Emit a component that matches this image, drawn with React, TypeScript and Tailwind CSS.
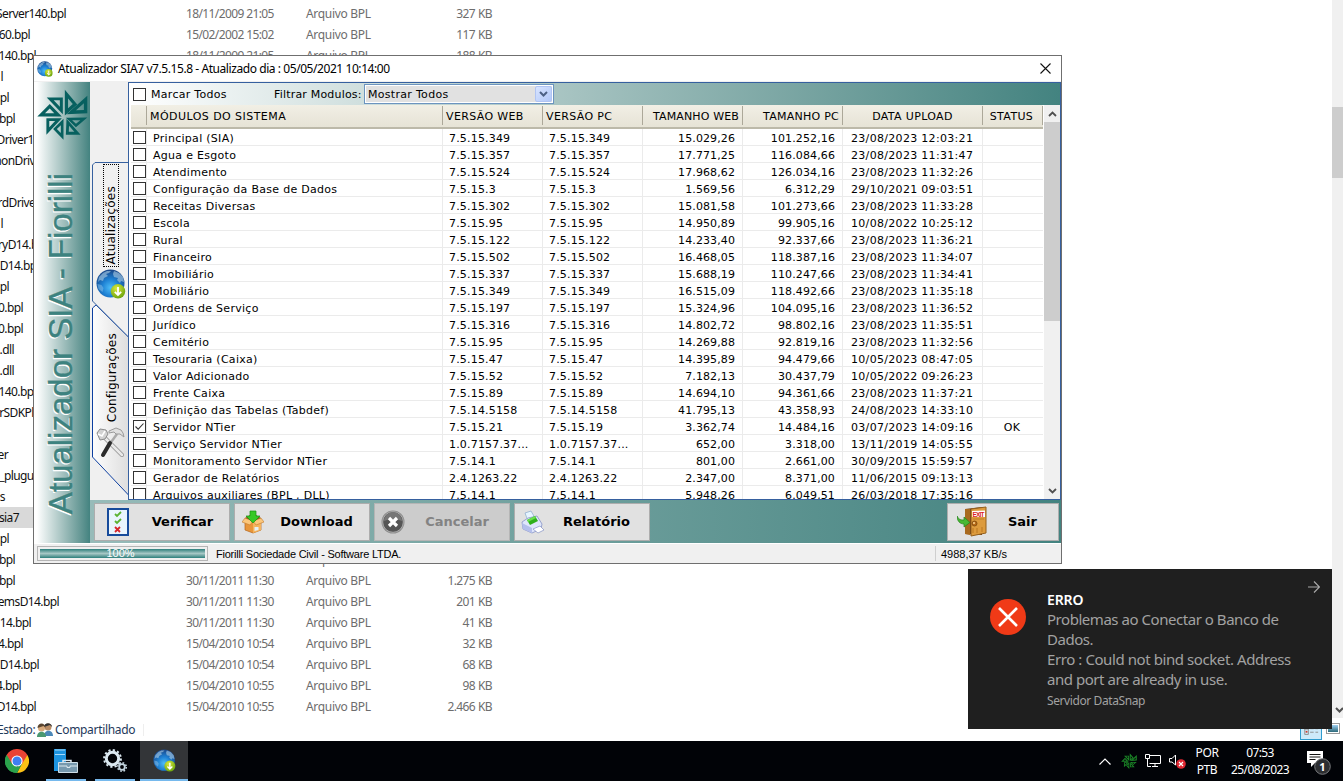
import type { ReactNode } from "react";

type FileRow = { name: string; end: number; date?: string; kind?: string; size?: string; selected?: boolean };

const files: FileRow[] = [
  { name: "Server140.bpl", end: 66, date: "18/11/2009 21:05", kind: "Arquivo BPL", size: "327 KB" },
  { name: "60.bpl", end: 30, date: "15/02/2002 15:02", kind: "Arquivo BPL", size: "117 KB" },
  { name: "140.bpl", end: 36, date: "18/11/2009 21:05", kind: "Arquivo BPL", size: "188 KB" },
  { name: "l", end: 3 },
  { name: "pl", end: 9 },
  { name: "bpl", end: 15 },
  { name: "Driver140.bpl", end: 65 },
  { name: "monDriver140.bpl", end: 83 },
  { name: "", end: 0 },
  { name: "rdDriver140.bpl", end: 77 },
  { name: "l", end: 3 },
  { name: "ryD14.bpl", end: 47 },
  { name: "D14.bpl", end: 39 },
  { name: "pl", end: 9 },
  { name: "0.bpl", end: 23 },
  { name: "0.bpl", end: 23 },
  { name: ".dll", end: 14 },
  { name: ".dll", end: 14 },
  { name: "140.bpl", end: 36 },
  { name: "rSDKPlugin.dll", end: 71 },
  { name: "", end: 0 },
  { name: "er", end: 8 },
  { name: "_pluguin", end: 43 },
  { name: "s", end: 5 },
  { name: "sia7", end: 19, selected: true },
  { name: "pl", end: 9 },
  { name: "bpl", end: 15, date: "02/11/2009 21:02", kind: "Arquivo BPL", size: "257 KB" },
  { name: "bpl", end: 15, date: "30/11/2011 11:30", kind: "Arquivo BPL", size: "1.275 KB" },
  { name: "emsD14.bpl", end: 59, date: "30/11/2011 11:30", kind: "Arquivo BPL", size: "201 KB" },
  { name: "14.bpl", end: 31, date: "30/11/2011 11:30", kind: "Arquivo BPL", size: "41 KB" },
  { name: "4.bpl", end: 23, date: "15/04/2010 10:54", kind: "Arquivo BPL", size: "32 KB" },
  { name: "D14.bpl", end: 39, date: "15/04/2010 10:54", kind: "Arquivo BPL", size: "68 KB" },
  { name: "4.bpl", end: 21, date: "15/04/2010 10:55", kind: "Arquivo BPL", size: "98 KB" },
  { name: "D14.bpl", end: 36, date: "15/04/2010 10:55", kind: "Arquivo BPL", size: "2.466 KB" },
];

const modules: string[][] = [
  ["Principal (SIA)", "7.5.15.349", "7.5.15.349", "15.029,26", "101.252,16", "23/08/2023 12:03:21"],
  ["Agua e Esgoto", "7.5.15.357", "7.5.15.357", "17.771,25", "116.084,66", "23/08/2023 11:31:47"],
  ["Atendimento", "7.5.15.524", "7.5.15.524", "17.968,62", "126.034,16", "23/08/2023 11:32:26"],
  ["Configuração da Base de Dados", "7.5.15.3", "7.5.15.3", "1.569,56", "6.312,29", "29/10/2021 09:03:51"],
  ["Receitas Diversas", "7.5.15.302", "7.5.15.302", "15.081,58", "101.273,66", "23/08/2023 11:33:28"],
  ["Escola", "7.5.15.95", "7.5.15.95", "14.950,89", "99.905,16", "10/08/2022 10:25:12"],
  ["Rural", "7.5.15.122", "7.5.15.122", "14.233,40", "92.337,66", "23/08/2023 11:36:21"],
  ["Financeiro", "7.5.15.502", "7.5.15.502", "16.468,05", "118.387,16", "23/08/2023 11:34:07"],
  ["Imobiliário", "7.5.15.337", "7.5.15.337", "15.688,19", "110.247,66", "23/08/2023 11:34:41"],
  ["Mobiliário", "7.5.15.349", "7.5.15.349", "16.515,09", "118.492,66", "23/08/2023 11:35:18"],
  ["Ordens de Serviço", "7.5.15.197", "7.5.15.197", "15.324,96", "104.095,16", "23/08/2023 11:36:52"],
  ["Jurídico", "7.5.15.316", "7.5.15.316", "14.802,72", "98.802,16", "23/08/2023 11:35:51"],
  ["Cemitério", "7.5.15.95", "7.5.15.95", "14.269,88", "92.819,16", "23/08/2023 11:32:56"],
  ["Tesouraria (Caixa)", "7.5.15.47", "7.5.15.47", "14.395,89", "94.479,66", "10/05/2023 08:47:05"],
  ["Valor Adicionado", "7.5.15.52", "7.5.15.52", "7.182,13", "30.437,79", "10/05/2022 09:26:23"],
  ["Frente Caixa", "7.5.15.89", "7.5.15.89", "14.694,10", "94.361,66", "23/08/2023 11:37:21"],
  ["Definição das Tabelas (Tabdef)", "7.5.14.5158", "7.5.14.5158", "41.795,13", "43.358,93", "24/08/2023 14:33:10"],
  ["Servidor NTier", "7.5.15.21", "7.5.15.19", "3.362,74", "14.484,16", "03/07/2023 14:09:16", "OK"],
  ["Serviço Servidor NTier", "1.0.7157.37...", "1.0.7157.37...", "652,00", "3.318,00", "13/11/2019 14:05:55"],
  ["Monitoramento Servidor NTier", "7.5.14.1", "7.5.14.1", "801,00", "2.661,00", "30/09/2015 15:59:57"],
  ["Gerador de Relatórios", "2.4.1263.22", "2.4.1263.22", "2.347,00", "8.371,00", "11/06/2015 09:13:13"],
  ["Arquivos auxiliares (BPL , DLL)", "7.5.14.1", "7.5.14.1", "5.948,26", "6.049,51", "26/03/2018 17:35:16"],
];

const gridCols = "grid grid-cols-[16px_296px_100px_100px_100px_100px_140px_60px]";

function Globe({ className }: { className: string }) {
  return (
    <svg viewBox="0 0 30 30" className={className}>
      <defs>
        <radialGradient id="sea" cx="0.5" cy="0.65" r="0.62">
          <stop offset="0" stopColor="#4dbcf8" />
          <stop offset="0.5" stopColor="#1d7fd2" />
          <stop offset="1" stopColor="#1b4a8c" />
        </radialGradient>
        <radialGradient id="lime" cx="0.4" cy="0.3" r="0.8">
          <stop offset="0" stopColor="#d9e83c" />
          <stop offset="1" stopColor="#5f9c08" />
        </radialGradient>
      </defs>
      <circle cx="14.5" cy="14.5" r="14" fill="url(#sea)" />
      <path d="M3 8 7 4l4-2 4 0-2 2-3 1 2 2-4 2-1 3-3-1-2 2ZM18 2l5 2 4 4 1 5-3-1-1 2-3-3 1-2-4-1-1-3Z" fill="#a9cbe4" opacity=".62" />
      <path d="M1.500 15l4 1 2 3-1 4-4-3Z" fill="#8fc4ea" opacity=".5" />
      <circle cx="22" cy="22.3" r="7.2" fill="url(#lime)" />
      <path d="M22 18v8M18.8 22.9 22 26l3.2-3.1" fill="none" stroke="#fff" strokeWidth="1.8" />
    </svg>
  );
}

const blades: [number, number][][] = [
  [[95, 103], [132, 147], [95, 180]],
  [[162, 121], [162, 173], [100, 176]],
  [[162, 186], [128, 215], [98, 187]],
  [[100, 190], [142, 237], [98, 237]],
  [[91, 252], [60, 220], [91, 190]],
  [[40, 237], [40, 188], [86, 188]],
  [[13, 183], [50, 146], [86, 183]],
  [[41, 126], [89, 126], [89, 176]],
];

function Pinwheel({ className, color }: { className: string; color: string }) {
  return (
    <svg viewBox="12 101 152 152" className={className}>
      {blades.map((pts, i) => {
        const [[ax, ay], [bx, by], [cx, cy]] = pts;
        const la = Math.hypot(bx - cx, by - cy);
        const lb = Math.hypot(ax - cx, ay - cy);
        const lc = Math.hypot(ax - bx, ay - by);
        const mx = (la * ax + lb * bx + lc * cx) / (la + lb + lc);
        const my = (la * ay + lb * by + lc * cy) / (la + lb + lc);
        const inner = pts.map(([x, y]) => `${mx + (x - mx) * 0.38} ${my + (y - my) * 0.38}`);
        return <path key={i} d={`M${pts.map((p) => p.join(" ")).join("L")}ZM${inner.join("L")}Z`} fill={color} fillRule="evenodd" />;
      })}
    </svg>
  );
}

function Tools() {
  return (
    <svg viewBox="0 0 30 31" className="h-[31px] w-[30px]">
      <path d="M5 7 26 28" stroke="#8d8d8d" strokeWidth="4" strokeLinecap="round" />
      <path d="M5 7 26 28" stroke="#e9e9e9" strokeWidth="2.600" strokeLinecap="round" />
      <path d="M1 6 4 2l6 1 2 4-3 5-5 1Z" fill="#d2d2d2" stroke="#8b8b8b" />
      <path d="m2 7 4 2 3-5" fill="none" stroke="#fff" strokeWidth="1.500" />
      <path d="M21 7 13 18" stroke="#aaa" strokeWidth="2.500" />
      <path d="M14 16 7 28" stroke="#2b2b2b" strokeWidth="4" strokeLinecap="round" />
      <path d="M13 4 20 1l5 2 2 3 1 4-4-3-4 0-2-2-5 1Z" fill="#e0e0e0" stroke="#9a9a9a" />
    </svg>
  );
}

function Check({ on = false }: { on?: boolean }) {
  return (
    <span className="flex size-[13px] items-center justify-center border border-[#333] bg-white">
      {on && (
        <svg viewBox="0 0 11 11" className="size-[11px]">
          <path d="m1.500 5.500 2.700 2.700 5.300-5.700" fill="none" stroke="#333" strokeWidth="1.100" />
        </svg>
      )}
    </span>
  );
}

function Explorer() {
  return (
    <div className="flex min-h-0 flex-1 bg-white font-['Noto_Sans',sans-serif] text-xs tracking-[-0.45px]">
      <div className="flex min-w-0 flex-1 flex-col pt-[3px]">
        {files.map((f, i) => (
          <div key={i} className="flex h-[21px] shrink-0 items-center whitespace-nowrap">
            <div className={`flex h-full w-[186px] items-center ${f.selected ? "bg-[#d9d9d9]" : ""}`}>
              <div className="flex shrink-0 justify-end tracking-[-0.6px] text-[#111]" style={{ width: f.end }}>
                <span className="shrink-0">{f.name}</span>
              </div>
            </div>
            <span className="w-[120px] tracking-[-0.61px] text-[#6d6d6d]">{f.date}</span>
            <span className="w-[106px] tracking-[-0.3px] text-[#6d6d6d]">{f.kind}</span>
            <span className="w-20 text-right tracking-[-0.65px] text-[#6d6d6d] [word-spacing:0.7px]">{f.size}</span>
          </div>
        ))}
        <div className="mt-0.5 flex h-[22px] shrink-0 items-center text-[#1e395b]">
          <span className="-ml-[3px] w-10 tracking-[-0.45px]">Estado:</span>
          <svg viewBox="0 0 16 15" className="h-[15px] w-4">
            <circle cx="11" cy="4" r="3.500" fill="#b98d66" />
            <path d="M7 4c0-5 8-5 8 0l-2-2Z" fill="#333" />
            <path d="M7 13c0-7 9-7 9 0Z" fill="#4c88b8" />
            <circle cx="4.500" cy="5" r="3.500" fill="#d8aa7c" />
            <path d="M.5 5c0-6 8-6 8 0l-2-2Z" fill="#5b4630" />
            <path d="M0 14c0-7 9-7 9 0Z" fill="#4b9870" />
          </svg>
          <span className="ml-0.5 tracking-[-0.33px]">Compartilhado</span>
          <span className="ml-2 h-3 w-px bg-[#eee]" />
        </div>
      </div>
      <div className="flex w-[43px] flex-col">
        <div className="ml-auto flex h-[718px] w-[11px] flex-col bg-[#f0f0f0]">
          <div className="mt-[107px] h-[71px] bg-[#cdcdcd]" />
          <svg viewBox="0 0 11 8" className="mt-auto mb-1 h-2 w-[11px]">
            <path d="m4 2 3.500 3.500L11 2" fill="none" stroke="#505050" strokeWidth="2" />
          </svg>
        </div>
        <div className="flex h-[23px] items-start">
          <div className="flex h-[22px] w-[22px] items-end border border-[#2f9ccf] bg-[#cdeafa] p-[2px]">
            <svg viewBox="0 0 18 14" className="h-3.5 w-full">
              <path d="M2 0v12h4V0M2 6h4M8 2.500h4M14 2.500h3M8 5.500h4M14 5.500h3M8 9.500h4M14 9.500h3" fill="none" stroke="#888" />
              <path d="M3 8h2v2H3Z" fill="#d43b2e" />
            </svg>
          </div>
          <div className="mt-[5px] ml-1 h-[11px] w-[14px] border border-[#999] bg-white p-px">
            <div className="h-full bg-gradient-to-b from-[#9fd0f2] to-[#2b6a7a]" />
          </div>
        </div>
      </div>
    </div>
  );
}

function ActionButton({ icon, label, disabled = false, className }: { icon: ReactNode; label: string; disabled?: boolean; className: string }) {
  return (
    <button
      className={`flex h-[38px] items-center border text-[13px] font-bold ${disabled ? "border-[#b5b5b5] bg-[#cccccc] text-[#838383]" : "border-[#adadad] bg-[#e1e1e1] text-black"} ${className}`}
    >
      <span className="flex w-9 shrink-0 justify-center">{icon}</span>
      <span className="flex-1 text-center">{label}</span>
    </button>
  );
}

function ChecklistIcon() {
  return (
    <svg viewBox="0 0 22 28" className="h-7 w-[22px]">
      <rect x="1" y="1" width="20" height="26" fill="#eaf5fd" stroke="#174b9b" strokeWidth="2" />
      <path d="m8 6 2 2 4-4M8 13l2 2 4-4" fill="none" stroke="#5bb331" strokeWidth="1.800" />
      <path d="m8 19 5 5M13 19l-5 5" stroke="#d7262b" strokeWidth="1.800" />
    </svg>
  );
}

function BoxIcon() {
  return (
    <svg viewBox="0 0 22 24" className="h-6 w-[22px]">
      <path d="m3 9 8 3 8-3v11l-8 3-8-3Z" fill="#e8963a" stroke="#b5651d" strokeWidth=".7" />
      <path d="m11 12 8-3v11l-8 3Z" fill="#f4b45e" />
      <path d="m3 8 8 3-3 4-8-3ZM19 8l-8 3 3 4 8-3Z" fill="#fbc77c" stroke="#c27b2e" strokeWidth=".6" />
      <path d="M3 8 8 5h6l5 3-8 3Z" fill="#9a5617" />
      <path d="M8 1h6v5h4l-7 7-7-7h4Z" fill="#36c924" stroke="#198f12" strokeWidth=".7" />
      <path d="M12.500 17h4v3l-4 1Z" fill="#e4f1f8" />
    </svg>
  );
}

function CancelIcon() {
  return (
    <svg viewBox="0 0 24 24" className="size-6">
      <circle cx="12" cy="12" r="11.500" fill="#8d8d8d" />
      <circle cx="12" cy="12" r="10.300" fill="#565656" stroke="#b8b8b8" strokeWidth=".8" />
      <path d="M3 11a9 9 0 0 1 18 0q-9-4-18 0Z" fill="#777" />
      <path d="m8 8 8 8M16 8l-8 8" stroke="#fff" strokeWidth="3.200" />
    </svg>
  );
}

function PrinterIcon() {
  return (
    <svg viewBox="0 0 24 24" className="size-6">
      <path d="M4 3 10 1l4 7-7 3Z" fill="#e6f5ff" stroke="#8aa9cb" strokeWidth=".7" />
      <path d="m1 12 6-4 9-2 5 8-1 5-9 4-9-4Z" fill="#dfe6fb" stroke="#8592c4" strokeWidth=".8" />
      <path d="m1 13 10 5v5l-9-4Z" fill="#b4bfec" />
      <path d="m6 10 8-4 3 5-8 4Z" fill="#2eb01a" />
      <path d="m6 10 8-4 1 2-8 4Z" fill="#6ae04c" />
      <path d="m12 19 7-3 4 4-6 3Z" fill="#fff" stroke="#8592c4" strokeWidth=".7" />
    </svg>
  );
}

function ExitIcon() {
  return (
    <svg viewBox="0 0 30 31" className="ml-1.5 h-[31px] w-[30px]">
      <path d="M8 3 25 1v28l-17-1Z" fill="#6b3a10" />
      <path d="M8 3h5v26l-5-1Z" fill="#a8691f" />
      <path d="M14 3 29 1v26l-15 3Z" fill="#dd9b3d" stroke="#94601e" />
      <path d="M16 13h11M16 22v5M20 22v5M25 21v5" stroke="#c17e26" strokeWidth="1.200" />
      <path d="M15 5 28 4.500V11H15Z" fill="#fff" />
      <text x="15.500" y="10.500" fontSize="6.500" fontWeight="700" fill="#dc1f26" fontFamily="Liberation Sans, sans-serif" textLength="12">EXIT</text>
      <circle cx="17.500" cy="17.500" r="2.500" fill="#b86b19" stroke="#70400c" strokeWidth=".7" />
      <circle cx="17" cy="17" r="1" fill="#ffd894" />
      <path d="M0 10c2 4 4 4 7 4v-3l6 5.500L7 21v-3C3 18 0 15 0 10Z" fill="#47b933" stroke="#23801a" strokeWidth=".7" />
    </svg>
  );
}

function SideTabs() {
  return (
    <div className="relative w-[38px] shrink-0 bg-[#f0f0f0]">
      <svg viewBox="0 0 38 418" className="absolute inset-0 h-[418px] w-[38px]">
        <defs>
          <linearGradient id="tab" x1="0" x2="1">
            <stop offset="0" stopColor="#fdfdfd" />
            <stop offset="1" stopColor="#dedede" />
          </linearGradient>
        </defs>
        <path d="M2.500 226v149L38.500 413V255L6 223Z" fill="url(#tab)" stroke="#0d3fa0" />
        <path d="M38.500 80.500H5l-2.500 2.500v136l4 4 32 32Z" fill="#f0f0f0" />
        <path d="M38 80.500H5l-2.500 2.500v136l4 4 32 32" fill="none" stroke="#36609f" />
      </svg>
      <div className="relative flex h-full flex-col items-center pl-1">
        <div className="mt-[82px] flex h-[103px] w-4 items-center justify-center border border-dotted border-black pt-[20px]">
          <span className="rotate-180 text-xs leading-4 tracking-[0.25px] [writing-mode:vertical-rl]">Atualizações</span>
        </div>
        <Globe className="mt-0.5 size-[30px]" />
        <div className="mt-[33px] ml-0.5 flex h-[91px] items-center">
          <span className="rotate-180 text-xs leading-4 tracking-[0.25px] [writing-mode:vertical-rl]">Configurações</span>
        </div>
        <div className="mt-1"><Tools /></div>
      </div>
    </div>
  );
}

function ModulesPanel() {
  const head = "flex h-[19px] items-center whitespace-nowrap border-r border-[#aca899] pt-[3px]";
  const cell = "flex items-center overflow-hidden whitespace-nowrap border-r border-b border-[#ebebeb] pt-1 leading-3";
  return (
    <div className="flex h-[418px] flex-1 flex-col border border-[#36609f] bg-white tracking-[0.29px]">
      <div className="flex h-[22px] shrink-0 items-center bg-gradient-to-r from-white to-[#438380] pl-1">
        <Check />
        <span className="ml-[5px] w-[123px] pt-0.5 leading-[14px]">Marcar Todos</span>
        <span className="w-[90px] pt-0.5 leading-[14px] tracking-[0.19px]">Filtrar Modulos:</span>
        <div className="flex h-5 w-[190px] items-center border border-[#6c94bf] bg-[#e1e1e1] pl-[3px] ring-1 ring-white ring-inset">
          <span className="flex-1 pt-0.5 leading-[14px] tracking-[0.3px]">Mostrar Todos</span>
          <span className="mr-px flex h-4 w-[17px] items-center justify-center rounded-[2px] border border-[#b0c4f3] bg-gradient-to-br from-[#d8e4ff] to-[#b2c8f8]">
            <svg viewBox="0 0 9 6" className="h-1.5 w-[9px]">
              <path d="m1 1 3.500 3.500L8 1" fill="none" stroke="#4d6185" strokeWidth="2" />
            </svg>
          </span>
        </div>
      </div>
      <div className="flex min-h-0 flex-1 pl-0.5">
        <div className="flex w-[912px] flex-col overflow-hidden">
          <div className={`${gridCols} h-6 shrink-0 border-b-2 border-[#bcb9a9] bg-gradient-to-b from-[#f1efe5] to-[#e6e3d6] pt-px tracking-[0.36px]`}>
            <span className={head} />
            <span className={`${head} pl-[3px] tracking-[0.45px]`}>MÓDULOS DO SISTEMA</span>
            <span className={`${head} pl-[3px]`}>VERSÃO WEB</span>
            <span className={`${head} pl-[3px]`}>VERSÃO PC</span>
            <span className={`${head} justify-end pr-[3px] tracking-[0.14px]`}>TAMANHO WEB</span>
            <span className={`${head} justify-end pr-[3px] tracking-[0.26px]`}>TAMANHO PC</span>
            <span className={`${head} justify-center`}>DATA UPLOAD</span>
            <span className={`${head} justify-center pr-0.5`}>STATUS</span>
          </div>
          {modules.map((m) => (
            <div key={m[0]} className={`${gridCols} h-[17px] shrink-0 grid-rows-[17px]`}>
              <span className="flex items-center border-r border-b border-[#ebebeb] pt-px pl-0.5"><Check on={m[6] === "OK"} /></span>
              <span className={`${cell} pl-1.5`}>{m[0]}</span>
              <span className={`${cell} pl-1.5 tracking-[0.18px]`}>{m[1]}</span>
              <span className={`${cell} pl-1.5 tracking-[0.18px]`}>{m[2]}</span>
              <span className={`${cell} justify-end pr-[7px] tracking-[0.1px]`}>{m[3]}</span>
              <span className={`${cell} justify-end pr-[7px] tracking-[0.12px]`}>{m[4]}</span>
              <span className={`${cell} pl-2 tracking-[0.31px]`}>{m[5]}</span>
              <span className="flex items-center justify-center border-b border-[#ebebeb] pt-1 pr-0.5 leading-3">{m[6]}</span>
            </div>
          ))}
        </div>
        <div className="ml-auto flex w-4 flex-col items-center bg-[#f0f0f0]">
          <svg viewBox="0 0 9 6" className="mt-1.5 h-1.5 w-[9px]">
            <path d="M1 5 4.500 1.500 8 5" fill="none" stroke="#505050" strokeWidth="1.800" />
          </svg>
          <div className="mt-[5px] h-[199px] w-full bg-[#cdcdcd]" />
          <svg viewBox="0 0 9 6" className="mt-auto mb-[5px] h-1.5 w-[9px]">
            <path d="M1 1 4.500 4.500 8 1" fill="none" stroke="#505050" strokeWidth="1.800" />
          </svg>
        </div>
      </div>
    </div>
  );
}

function UpdaterWindow() {
  return (
    <div className="absolute top-[55px] left-[33px] flex h-[509px] w-[1029px] flex-col border border-[#6f6f6f] bg-[#f0f0f0] font-['DejaVu_Sans',sans-serif] text-[11px] text-black">
      <div className="flex h-[26px] shrink-0 items-center border-b border-[#f0f0f0] bg-white pr-[10px] pl-[3px] font-['Noto_Sans',sans-serif] text-xs">
        <Globe className="size-4" />
        <span className="ml-[5px] tracking-[-0.43px]">Atualizador SIA7 v7.5.15.8 - Atualizado dia : 05/05/2021 10:14:00</span>
        <svg viewBox="0 0 11 11" className="ml-auto size-[11px]">
          <path d="m.5.5 10 10M10.500.5l-10 10" stroke="#111" strokeWidth="1.100" />
        </svg>
      </div>
      <div className="flex h-[461px] shrink-0">
        <div className="flex w-14 shrink-0 flex-col items-center bg-gradient-to-r from-white from-5% to-[#438380]">
          <Pinwheel className="mt-[7px] ml-[3px] size-[51px] shrink-0 self-start" color="#07605f" />
          <span className="mt-[33px] -ml-0.5 rotate-180 font-['Liberation_Sans',sans-serif] text-[33px] leading-[38px] whitespace-nowrap text-[#3d827f] [-webkit-text-stroke:0.4px_#3d827f] [text-shadow:-1.500px_-1px_0_#fff] [writing-mode:vertical-rl]">
            Atualizador SIA - Fiorilli
          </span>
        </div>
        <div className="flex flex-1 flex-col">
          <div className="flex h-[418px] shrink-0">
            <SideTabs />
            <ModulesPanel />
          </div>
          <div className="flex h-[43px] items-center gap-1 bg-gradient-to-r from-[#97bbb9] to-[#438380] pr-0.5 pl-1">
            <ActionButton className="w-[136px] pl-[5px]" icon={<ChecklistIcon />} label="Verificar" />
            <ActionButton className="w-[136px] pr-[7px]" icon={<BoxIcon />} label="Download" />
            <ActionButton className="w-[136px] pr-[6px]" disabled icon={<CancelIcon />} label="Cancelar" />
            <ActionButton className="w-[136px] pr-[7px]" icon={<PrinterIcon />} label="Relatório" />
            <ActionButton className="ml-auto w-[112px] pl-[3px]" icon={<ExitIcon />} label="Sair" />
          </div>
        </div>
      </div>
      <div className="flex flex-1 items-center border-t border-white pl-[3px] font-['Liberation_Sans',sans-serif]">
        <div className="h-[15px] w-[171px] border border-[#b5b5b5] p-[2px]">
          <div className="flex h-full items-center justify-center bg-gradient-to-b from-[#287f7c] via-[#a5c7c5] to-[#287f7c] pr-1 text-[11px] text-white">100%</div>
        </div>
        <span className="ml-2 w-[719px] pt-px tracking-[-0.22px]">Fiorilli Sociedade Civil - Software LTDA.</span>
        <span className="h-[15px] border-l border-[#cfcfcf] pl-[5px] leading-4">4988,37 KB/s</span>
      </div>
    </div>
  );
}

function Toast() {
  return (
    <div className="absolute top-[569px] left-[968px] flex h-[160px] w-[364px] bg-[#1f1f1f] pt-[20px] pl-[21px] font-['Noto_Sans',sans-serif] text-[#a2a2a2]">
      <svg viewBox="0 0 38 38" className="mt-[9px] size-[38px] shrink-0">
        <circle cx="19" cy="19" r="18" fill="#f03a17" />
        <path d="m10 10 18 18M28 10 10 28" stroke="#fff" strokeWidth="2.600" />
      </svg>
      <div className="ml-5 flex flex-col text-[15px] leading-5 tracking-[-0.46px] whitespace-nowrap">
        <span className="text-sm leading-[22px] font-semibold tracking-[-0.1px] text-white">ERRO</span>
        <span className="-mt-0.5">Problemas ao Conectar o Banco de</span>
        <span>Dados.</span>
        <span className="tracking-[-0.42px]">Erro : Could not bind socket. Address</span>
        <span>and port are already in use.</span>
        <span className="mt-0.5 text-xs leading-5 tracking-[-0.4px]">Servidor DataSnap</span>
      </div>
      <svg viewBox="0 0 12 12" className="-mt-2 mr-3 ml-auto size-3">
        <path d="M0 6h11.500M6 .5 11.500 6 6 11.500" fill="none" stroke="#a8a8a8" strokeWidth="1.200" />
      </svg>
    </div>
  );
}

function Taskbar() {
  return (
    <div className="flex h-10 shrink-0 items-stretch bg-[#010307] font-['Noto_Sans',sans-serif] text-xs text-white">
      <div className="flex w-[46px] items-center pl-[5px]">
        <svg viewBox="0 0 24 24" className="size-6">
          <path d="M12 12 1.600 6A12 12 0 0 1 22.400 6Z" fill="#ea4335" />
          <path d="M12 12V24A12 12 0 0 1 1.600 6Z" fill="#2ba24c" />
          <path d="M12 12 22.400 6A12 12 0 0 1 12 24L17 14Z" fill="#fbc116" />
          <path d="M12 6h10.400L17 15ZM1.600 6 7 15l5-3V6Z" fill="#ea4335" />
          <path d="M1.600 6 7 15l5 3 5-3-5 9A12 12 0 0 1 1.600 6Z" fill="#2ba24c" />
          <circle cx="12" cy="12" r="5.600" fill="#fff" />
          <circle cx="12" cy="12" r="4.500" fill="#3f7ff0" />
        </svg>
      </div>
      <div className="flex w-10 flex-col items-center border-b-2 border-[#76b9ed] pt-2">
        <svg viewBox="0 0 24 24" className="size-6">
          <path d="M0 0h12v22H0Z" fill="#1d94e0" />
          <path d="M1 5.500h10M1 1h10" stroke="#a7dafa" />
          <path d="M9 13.500V11.500h8v2" fill="none" stroke="#dce8f0" strokeWidth="1.500" />
          <path d="M4.500 13.500h19v10h-19Z" fill="#7799ae" stroke="#cfdfe8" />
          <path d="M5 17h8v1.500h3V17h8" fill="none" stroke="#dbe8ef" />
        </svg>
      </div>
      <div className="ml-[9px] flex w-10 flex-col items-center border-b-2 border-[#76b9ed] pt-2">
        <svg viewBox="0 0 24 24" className="size-6">
          <circle cx="9.500" cy="9.500" r="6.200" fill="none" stroke="#dbe9f1" strokeWidth="3" />
          <circle cx="9.500" cy="9.500" r="8.400" fill="none" stroke="#dbe9f1" strokeWidth="2" strokeDasharray="2.200 2.200" />
          <circle cx="19" cy="18" r="2.800" fill="none" stroke="#c3d4df" strokeWidth="1.800" />
          <circle cx="19" cy="18" r="4.300" fill="none" stroke="#c3d4df" strokeWidth="1.500" strokeDasharray="1.690 1.690" />
        </svg>
      </div>
      <div className="ml-[5px] flex w-12 flex-col items-center border-b-2 border-[#76b9ed] bg-[#333538] pt-2">
        <Globe className="size-[23px]" />
      </div>
      <div className="ml-auto flex items-center">
        <svg viewBox="0 0 12 7" className="h-[7px] w-3">
          <path d="m.5 6.500 5.500-5.500 5.500 5.500" fill="none" stroke="#fff" strokeWidth="1.200" />
        </svg>
        <Pinwheel className="ml-[10px] size-4" color="#1b8527" />
        <svg viewBox="0 0 16 14" className="ml-2 h-3.5 w-4">
          <path d="M4.500 1.500h11v8h-11M7 12.500h6M10 9.500v3M2.500 5v7.500H6M.5.5h4v4h-4Z" fill="none" stroke="#fff" />
        </svg>
        <svg viewBox="0 0 17 16" className="ml-2 h-4 w-[17px]">
          <path d="M.5 5.500h2.500l3.500-3.500v10L3 9H.5Z" fill="none" stroke="#fff" />
          <circle cx="12" cy="11" r="4.800" fill="#e02832" />
          <path d="m10 9 4 4m0-4-4 4" stroke="#fff" strokeWidth="1.200" />
        </svg>
        <div className="ml-[8px] flex w-[26px] flex-col items-center leading-[17px] tracking-[-0.4px]">
          <span>POR</span>
          <span>PTB</span>
        </div>
        <div className="ml-[10px] flex w-[60px] flex-col items-center leading-[17px] tracking-[-0.6px]">
          <span>07:53</span>
          <span>25/08/2023</span>
        </div>
        <svg viewBox="0 0 24 24" className="mt-1 mr-3 ml-[17px] size-6">
          <path d="M0 0h16v12H8l-4 4v-4H0Z" fill="#fff" />
          <path d="M2.500 3.500h11M2.500 6h11M2.500 8.500h6" stroke="#111" />
          <circle cx="15.500" cy="15.500" r="7.800" fill="#2c2e31" stroke="#77797c" />
          <text x="15.500" y="19.500" fontSize="11" fontWeight="700" fill="#fff" textAnchor="middle" fontFamily="Noto Sans, sans-serif">1</text>
        </svg>
      </div>
    </div>
  );
}

export default function App() {
  return (
    <div className="relative flex h-[781px] w-[1343px] flex-col overflow-hidden bg-white">
      <Explorer />
      <Taskbar />
      <UpdaterWindow />
      <Toast />
    </div>
  );
}
